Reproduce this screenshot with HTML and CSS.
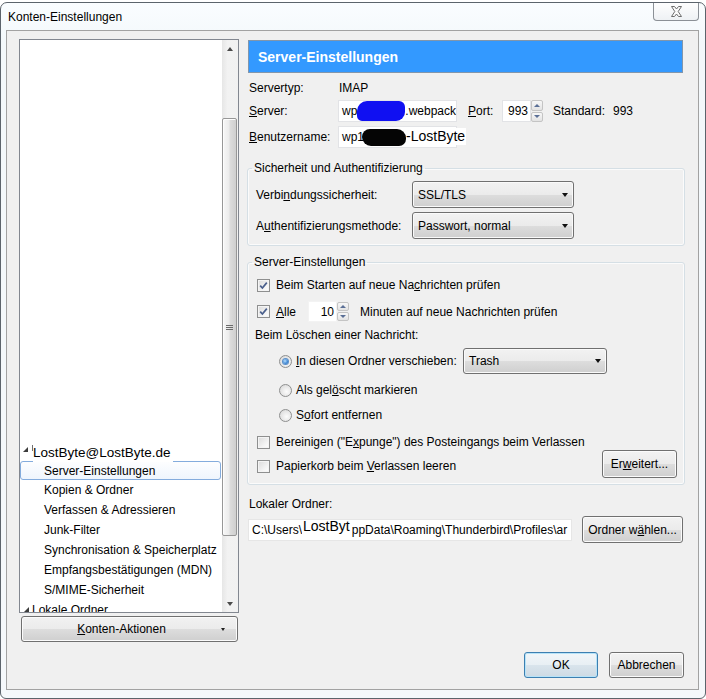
FILE: index.html
```html
<!DOCTYPE html>
<html lang="de">
<head>
<meta charset="utf-8">
<title>Konten-Einstellungen</title>
<link rel="stylesheet" href="styles.css">
</head>
<body>
<div class="window">
  <div class="titlebar">
    <span class="title">Konten-Einstellungen</span>
    <button class="close" type="button" aria-label="Schließen">
      <svg width="13" height="11" viewBox="0 0 13 11"><path d="M1.5 0.5 H4.5 L6.5 3 L8.5 0.5 H11.5 L8.2 5.5 L11.5 10.5 H8.5 L6.5 8 L4.5 10.5 H1.5 L4.8 5.5 Z" fill="#fbfbfb" stroke="#6d6d6d" stroke-width="1" stroke-linejoin="round"/></svg>
    </button>
  </div>
  <div class="client">
    <div class="main">
      <div class="left">
        <div class="tree">
          <div class="tree-list">
            <div class="tree-row account"><span class="twisty"></span><span class="tick"></span><span class="paste-name">LostByte@LostByte.de</span></div>
            <div class="tree-row item selected">Server-Einstellungen</div>
            <div class="tree-row item">Kopien &amp; Ordner</div>
            <div class="tree-row item">Verfassen &amp; Adressieren</div>
            <div class="tree-row item">Junk-Filter</div>
            <div class="tree-row item">Synchronisation &amp; Speicherplatz</div>
            <div class="tree-row item">Empfangsbestätigungen (MDN)</div>
            <div class="tree-row item">S/MIME-Sicherheit</div>
            <div class="tree-row account local"><span class="twisty"></span>Lokale Ordner</div>
          </div>
          <div class="vscroll">
            <div class="sb-btn"><span class="tri-up"></span></div>
            <div class="sb-track"><div class="thumb"><span class="grip"></span></div></div>
            <div class="sb-btn"><span class="tri-down"></span></div>
          </div>
        </div>
        <button class="btn menu-btn" type="button"><span class="menu-text"><u>K</u>onten-Aktionen</span><span class="tri-small"></span></button>
      </div>

      <div class="right">
        <div class="page-header">Server-Einstellungen</div>

        <div class="info">
          <div class="row r-type"><span class="lbl">Servertyp:</span><span class="val">IMAP</span></div>
          <div class="row">
            <span class="lbl"><u>S</u>erver:</span>
            <div class="textbox host">wp<span class="blob blue"></span>.webpack</div>
            <span class="port-lbl"><u>P</u>ort:</span>
            <div class="textbox port">993</div>
            <div class="spin"><span class="sp-up"></span><span class="sp-down"></span></div>
            <span class="std-lbl">Standard:</span><span>993</span>
          </div>
          <div class="row">
            <span class="lbl"><u>B</u>enutzername:</span>
            <div class="textbox host user">wp1<span class="blob black"></span><span class="paste">-LostByte</span></div>
          </div>
        </div>

        <fieldset class="group g-sec">
          <legend>Sicherheit und Authentifizierung</legend>
          <div class="g-row"><span class="g-lbl">Verbi<u>n</u>dungssicherheit:</span><div class="combo"><span>SSL/TLS</span><span class="tri-combo"></span></div></div>
          <div class="g-row gap4"><span class="g-lbl">A<u>u</u>thentifizierungsmethode:</span><div class="combo"><span>Passwort, normal</span><span class="tri-combo"></span></div></div>
        </fieldset>

        <fieldset class="group g-srv">
          <legend>Server-Einstellungen</legend>
          <div class="c-row r1"><span class="cb"><svg width="11" height="11" viewBox="0 0 11 11"><path d="M2.2 5.6 L4.4 8 L8.8 2.6" fill="none" stroke="#4a5f8c" stroke-width="1.7"/></svg></span><span class="c-text">Beim Starten auf neue Na<u>c</u>hrichten prüfen</span></div>
          <div class="c-row r2"><span class="cb"><svg width="11" height="11" viewBox="0 0 11 11"><path d="M2.2 5.6 L4.4 8 L8.8 2.6" fill="none" stroke="#4a5f8c" stroke-width="1.7"/></svg></span><span class="c-text alle"><u>A</u>lle</span><div class="textbox num">10</div><div class="spin small"><span class="sp-up"></span><span class="sp-down"></span></div><span class="min-text">Minuten auf neue Nachrichten prüfen</span></div>
          <div class="plain r3">Beim Löschen einer Nachricht:</div>
          <div class="c-row radio-row r4"><span class="rb on"></span><span class="r-text move"><u>I</u>n diesen Ordner verschieben:</span><div class="combo trash"><span>Trash</span><span class="tri-combo"></span></div></div>
          <div class="c-row radio-row r5"><span class="rb"></span><span class="r-text">Als gel<u>ö</u>scht markieren</span></div>
          <div class="c-row radio-row r6"><span class="rb"></span><span class="r-text">S<u>o</u>fort entfernen</span></div>
          <div class="c-row r7"><span class="cb"></span><span class="c-text">Bereinigen ("E<u>x</u>punge") des Posteingangs beim Verlassen</span></div>
          <div class="c-row r8"><span class="cb"></span><span class="c-text">Papierkorb beim <u>V</u>erlassen leeren</span><button class="btn adv" type="button">Er<u>w</u>eitert...</button></div>
        </fieldset>

        <div class="plain local-lbl">Lokaler Ordner:</div>
        <div class="row path-row">
          <div class="textbox path">C:\Users\<span class="paste path-paste">LostByt</span>ppData\Roaming\Thunderbird\Profiles\ar</div>
          <button class="btn choose" type="button">Ordner w<u>ä</u>hlen...</button>
        </div>
      </div>
    </div>

    <div class="dialog-buttons">
      <button class="btn ok" type="button">OK</button>
      <button class="btn cancel" type="button">Abbrechen</button>
    </div>
  </div>
</div>
</body>
</html>
```

FILE: styles.css
```css
* { box-sizing: border-box; }

html, body {
  margin: 0;
  padding: 0;
  background: #ffffff;
}

body {
  font-family: "Liberation Sans", Arial, sans-serif;
  font-size: 12px;
  color: #000;
  line-height: 14px;
}

u { text-decoration: underline; text-underline-offset: 1px; }

/* ---------- window frame ---------- */
.window {
  margin-top: 2px;
  width: 706px;
  height: 697px;
  border: 1px solid #5c646c;
  border-radius: 7px 7px 6px 6px;
  background: linear-gradient(#fafdff, #f3f8fb 40px, #f5f8fb);
  padding: 0 6px 8px 5px;
  display: flex;
  flex-direction: column;
}

.titlebar {
  height: 27px;
  flex: none;
  display: flex;
  justify-content: space-between;
  align-items: center;
  padding-left: 2px;
}

.title { font-size: 12px; color: #000; }

.close {
  align-self: flex-start;
  width: 46px;
  height: 18px;
  padding: 0;
  border: 1px solid #8b9096;
  border-top: none;
  border-radius: 0 0 4px 4px;
  background: linear-gradient(#fefefe, #eef1f4);
  display: flex;
  align-items: center;
  justify-content: center;
}

.client {
  flex: 1;
  border: 1px solid #a2a2a2;
  background: #f0f0f0;
  padding: 8px 12px 0 12px;
  display: flex;
  flex-direction: column;
}

.main {
  height: 603px;
  display: flex;
  gap: 9px;
  flex: none;
}

/* ---------- left: account tree ---------- */
.left {
  width: 220px;
  display: flex;
  flex-direction: column;
}

.tree {
  height: 574px;
  border: 1px solid #828790;
  background: #fff;
  display: flex;
}

.tree-list {
  flex: 1;
  overflow: hidden;
  padding-top: 400px;
}

.tree-row {
  height: 20px;
  display: flex;
  align-items: center;
  white-space: nowrap;
}

.item { padding-left: 24px; }

.item.selected {
  height: 19px;
  margin: 1px 1px 0 0;
  padding-left: 23px;
  border: 1px solid #84acdd;
  border-radius: 3px;
  background: linear-gradient(#fdfeff, #eff5fd);
}

.account { padding-left: 3px; }

.twisty {
  width: 0;
  height: 0;
  border-bottom: 5px solid #3c3c3c;
  border-left: 5px solid transparent;
  margin-right: 4px;
  margin-top: -1px;
}

.tick {
  width: 1px;
  height: 6px;
  background: #707070;
  margin-top: -4px;
}

.paste-name {
  position: relative;
  top: 3px;
  z-index: 1;
  background: #fff;
  font-size: 13.5px;
  line-height: 18px;
  padding-right: 2px;
}

.local { padding-left: 4px; }
.local .twisty { margin-right: 3px; }

/* scrollbar */
.vscroll {
  width: 16px;
  display: flex;
  flex-direction: column;
  background: linear-gradient(to right, #e6e6e6, #f2f2f2 35%, #f1f1f1);
}

.sb-btn {
  height: 17px;
  display: flex;
  align-items: center;
  justify-content: center;
}

.tri-up, .tri-down {
  width: 0;
  height: 0;
  border-left: 3.5px solid transparent;
  border-right: 3.5px solid transparent;
}
.tri-up { border-bottom: 4px solid #4a4a4a; }
.tri-down { border-top: 4px solid #4a4a4a; }

.sb-track {
  flex: 1;
  padding-top: 61px;
}

.thumb {
  height: 418px;
  margin-right: 1px;
  border: 1px solid #979797;
  border-radius: 2px;
  background: linear-gradient(to right, #f7f7f7, #ececec 45%, #dcdcdc 55%, #cfcfcf);
  box-shadow: inset 1px 1px 0 #fdfdfd;
  display: flex;
  align-items: center;
  justify-content: center;
}

.grip {
  width: 7px;
  height: 5px;
  border-top: 1px solid #6b6b6b;
  border-bottom: 1px solid #6b6b6b;
  background: linear-gradient(transparent 1px, #6b6b6b 1px, #6b6b6b 2px, transparent 2px);
}

/* ---------- buttons ---------- */
.btn {
  font: inherit;
  color: #000;
  padding: 0;
  border: 1px solid #707070;
  border-radius: 3px;
  background: linear-gradient(#f2f2f2 0%, #ebebeb 50%, #dddddd 51%, #cfcfcf 100%);
  box-shadow: inset 0 0 0 1px #fbfbfb;
  display: flex;
  align-items: center;
  justify-content: center;
}

.menu-btn {
  margin: 3px 1px 0 2px;
  height: 26px;
  padding-right: 12px;
}

.menu-text { flex: 1; text-align: center; }

.tri-small {
  width: 0;
  height: 0;
  border-left: 2.5px solid transparent;
  border-right: 2.5px solid transparent;
  border-top: 3px solid #202020;
}

/* ---------- right pane ---------- */
.right {
  width: 437px;
  display: flex;
  flex-direction: column;
}

.page-header {
  margin: 1px 2px 0 0;
  height: 33px;
  background: #3399ff;
  border: 1px solid #8296ab;
  color: #fff;
  font-weight: bold;
  font-size: 14px;
  padding-left: 9px;
  display: flex;
  align-items: center;
}

.info {
  margin-top: 7px;
  display: flex;
  flex-direction: column;
  gap: 4px;
}

.row {
  display: flex;
  align-items: center;
  white-space: nowrap;
}

.r-type { height: 16px; }

.lbl { width: 90px; padding-left: 1px; }
.val { padding-left: 1px; }

.textbox {
  height: 22px;
  background: #fff;
  border: 1px solid #e2e3e6;
  padding: 0 3px;
  display: flex;
  align-items: center;
  white-space: nowrap;
  overflow: hidden;
}

.host { width: 119px; }
.user { overflow: visible; }

.blob { display: inline-block; flex: none; }
.blob.blue {
  width: 48px;
  height: 20px;
  background: #1010f2;
  border-radius: 10px 6px 9px 5px;
}
.blob.black {
  width: 44px;
  height: 17px;
  margin-left: -2px;
  background: #050505;
  border-radius: 8px 9px 7px 9px;
}

.paste {
  display: inline-block;
  background: #fff;
  font-size: 14px;
  line-height: 17px;
  padding-right: 1px;
  margin-top: -2px;
}

.port-lbl { margin-left: 11px; width: 34px; }

.port {
  width: 29px;
  justify-content: flex-end;
  padding-right: 2px;
}

.spin {
  width: 12px;
  height: 22px;
  display: flex;
  flex-direction: column;
  gap: 1px;
}

.spin span {
  flex: 1;
  border: 1px solid #c4c4c4;
  border-radius: 2px;
  background: linear-gradient(#f7f7f7, #e3e3e3);
  display: flex;
  align-items: center;
  justify-content: center;
}

.spin .sp-up::after,
.spin .sp-down::after {
  content: "";
  width: 0;
  height: 0;
  border-left: 3px solid transparent;
  border-right: 3px solid transparent;
}
.spin .sp-up::after { border-bottom: 3px solid #5a6f96; }
.spin .sp-down::after { border-top: 3px solid #5a6f96; }

.std-lbl { margin-left: 10px; width: 60px; }

/* group boxes */
.group {
  margin: 0 0 0 -1px;
  width: 438px;
  min-width: 0;
  border: 1px solid #d5dfe5;
  border-radius: 3px;
  box-shadow: inset 0 0 0 1px #fbfbfb;
  padding: 6px 7px 6px 8px;
}

.group legend {
  padding: 0 2px;
  margin-left: -4px;
  line-height: 14px;
}

.g-sec { margin-top: 13px; }

.g-row {
  display: flex;
  align-items: center;
  height: 27px;
  white-space: nowrap;
}
.gap4 { margin-top: 4px; }

.g-lbl { width: 156px; }

.combo {
  width: 162px;
  height: 27px;
  border: 1px solid #707070;
  border-radius: 3px;
  background: linear-gradient(#f2f2f2 0%, #ebebeb 50%, #dddddd 51%, #cfcfcf 100%);
  box-shadow: inset 0 0 0 1px #fafafa;
  padding: 0 5px;
  display: flex;
  align-items: center;
  justify-content: space-between;
}

.tri-combo {
  width: 0;
  height: 0;
  border-left: 3.5px solid transparent;
  border-right: 3.5px solid transparent;
  border-top: 4px solid #111;
}

.g-srv {
  margin-top: 9px;
  padding-top: 8px;
}

.c-row {
  display: flex;
  align-items: center;
  white-space: nowrap;
  margin-left: 1px;
}

.cb {
  width: 13px;
  height: 13px;
  flex: none;
  border: 1px solid #8e8f8f;
  background: linear-gradient(135deg, #dadada, #f6f6f6 70%, #fdfdfd);
  box-shadow: inset 0 0 0 1px #f4f4f4;
  display: flex;
  align-items: center;
  justify-content: center;
}

.c-text { margin-left: 6px; }

.r1 { height: 16px; }
.r2 { height: 21px; margin-top: 8px; }
.alle { width: 32px; }
.num {
  width: 29px;
  height: 21px;
  justify-content: flex-end;
  padding-right: 2px;
  border-color: #f3f3f3;
}
.spin.small { height: 19px; }
.min-text { margin-left: 11px; }

.plain { white-space: nowrap; }
.r3 { height: 16px; margin-top: 5px; margin-left: -1px; display: flex; align-items: center; }

.radio-row { padding-left: 22px; }

.rb {
  width: 13px;
  height: 13px;
  flex: none;
  border: 1px solid #8e8f8f;
  border-radius: 50%;
  background: radial-gradient(circle at 60% 60%, #fcfcfc, #e4e4e4 60%, #cfcfcf);
  display: flex;
  align-items: center;
  justify-content: center;
}

.rb.on::after {
  content: "";
  width: 5px;
  height: 5px;
  border-radius: 50%;
  background: radial-gradient(circle at 40% 40%, #b9e0ff, #2a78cc 70%, #16508f);
  box-shadow: 0 0 0 1px #5b8fc9;
}

.r-text { margin-left: 4px; }

.r4 { height: 26px; margin-top: 5px; }
.move { width: 167px; }
.combo.trash { width: 144px; height: 26px; }

.r5 { height: 16px; margin-top: 8px; }
.r6 { height: 16px; margin-top: 9px; }
.r7 { height: 16px; margin-top: 11px; }

.r8 { height: 28px; align-items: flex-start; }
.r8 .cb { margin-top: 10px; }
.r8 .c-text { margin-top: 9px; }

.adv {
  margin-left: auto;
  width: 75px;
  height: 28px;
}

.local-lbl {
  margin-top: 11px;
  height: 16px;
  padding-left: 1px;
  display: flex;
  align-items: center;
}

.path-row { margin-top: 4px; height: 27px; }

.path {
  width: 324px;
  padding-left: 3px;
  overflow: hidden;
  border-color: #e6e6e6;
}

.path-paste {
  position: relative;
  top: -2px;
  padding: 0 2px 1px 1px;
  flex: none;
}

.choose {
  margin-left: 10px;
  width: 101px;
  height: 27px;
}

/* ---------- dialog buttons ---------- */
.dialog-buttons {
  margin-top: 10px;
  margin-right: 2px;
  display: flex;
  justify-content: flex-end;
  gap: 11px;
}

.ok, .cancel { height: 26px; }
.ok {
  width: 74px;
  border-color: #3c7fb1;
  box-shadow: inset 0 0 0 1px #b7e3f8;
  background: linear-gradient(#f1f6f9 0%, #e8eff4 50%, #d9e4ec 51%, #cddae4 100%);
}
.cancel { width: 75px; }
```
